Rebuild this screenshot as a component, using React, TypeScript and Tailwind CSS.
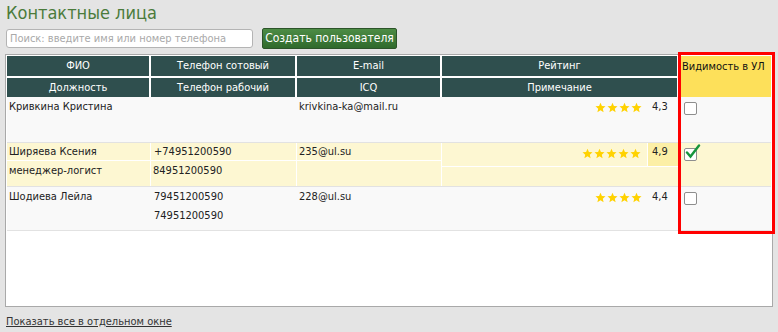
import React from 'react';

const font = { fontFamily: '"DejaVu Sans Condensed", "DejaVu Sans", sans-serif' };

const cols = 'grid grid-cols-[143px_145px_144px_236px_1fr] gap-x-[1px]';

const Star = () => (
  <svg width="11" height="11" viewBox="0 0 24 24" className="shrink-0">
    <path
      d="M12 1.5l3.1 7.2 7.8.7-5.9 5.1 1.8 7.6L12 18.1l-6.8 4 1.8-7.6-5.9-5.1 7.8-.7z"
      fill="#ffd200"
    />
  </svg>
);

const Stars: React.FC<{ n: number }> = ({ n }) => (
  <div className="flex gap-[1px] mt-[5px]">
    {Array.from({ length: n }).map((_, i) => (
      <Star key={i} />
    ))}
  </div>
);

const Checkbox: React.FC<{ checked?: boolean }> = ({ checked }) => (
  <div className="relative ml-[5px] mt-[5px] w-[13px] h-[13px] rounded-[2px] border border-[#8e8e8e] bg-white">
    {checked && (
      <svg width="16" height="16" viewBox="0 0 16 16" className="absolute left-[0px] top-[-5px]">
        <path d="M2 8.5l3.5 4L14 1.5" stroke="#16953c" strokeWidth="2.4" fill="none" strokeLinecap="round" />
      </svg>
    )}
  </div>
);

const App: React.FC = () => {
  return (
    <div className="relative w-[778px] h-[332px] bg-[#e4e4e4] text-[11px] text-[#222]" style={font}>
      <div className="pl-[6px] pt-[3px] text-[18px] leading-[20px] text-[#4b7b3b]">Контактные лица</div>

      <div className="flex items-center pl-[6px] mt-[5px]">
        <div className="w-[247px] h-[19px] bg-white border border-[#b4b4b4] rounded-[3px] pl-[3px] leading-[17px] text-[#a9a9a9]">
          Поиск: введите имя или номер телефона
        </div>
        <button className="ml-[9px] w-[135px] h-[21px] rounded-[2px] border border-[#2c5429] bg-gradient-to-b from-[#4d8c45] to-[#2f6a2c] text-white text-[12px] leading-[19px]">
          Создать пользователя
        </button>
      </div>

      <div className="ml-[5px] mt-[5px] w-[768px] h-[253px] border border-[#a9a9a9] bg-white p-[1px]">
        {/* header */}
        <div className="grid grid-cols-[142px_144px_143px_235px_1fr] grid-rows-[20px_19px] gap-[2px] text-white text-center">
          <div className="bg-[#2f4f4e] leading-[20px]">ФИО</div>
          <div className="bg-[#2f4f4e] leading-[20px]">Телефон сотовый</div>
          <div className="bg-[#2f4f4e] leading-[20px]">E-mail</div>
          <div className="bg-[#2f4f4e] leading-[20px]">Рейтинг</div>
          <div className="row-span-2 bg-[#fde05a] text-[#111] text-left pl-[3px] pt-[2px] leading-[18px]">Видимость в УЛ</div>
          <div className="bg-[#2f4f4e] leading-[19px]">Должность</div>
          <div className="bg-[#2f4f4e] leading-[19px]">Телефон рабочий</div>
          <div className="bg-[#2f4f4e] leading-[19px]">ICQ</div>
          <div className="bg-[#2f4f4e] leading-[19px]">Примечание</div>
        </div>

        {/* row 1 */}
        <div className={`${cols} h-[46px] bg-[#f9f9f9] border-b border-[#e2e2e2] leading-[20px]`}>
          <div className="pl-[2px]">Кривкина Кристина</div>
          <div />
          <div className="pl-[2px]">krivkina-ka@mail.ru</div>
          <div className="flex justify-end">
            <Stars n={4} />
            <div className="w-[30px] ml-[6px] pl-[4px]">4,3</div>
          </div>
          <div>
            <Checkbox />
          </div>
        </div>

        {/* row 2 */}
        <div className={`${cols} h-[44px] bg-white border-b border-[#e2e2e2] leading-[17px]`}>
          <div className="flex flex-col gap-[1px]">
            <div className="h-[17px] bg-[#fdf7d2] pl-[2px]">Ширяева Ксения</div>
            <div className="flex-1 bg-[#fdf7d2] pl-[2px] pt-[1px]">менеджер-логист</div>
          </div>
          <div className="flex flex-col gap-[1px]">
            <div className="h-[17px] bg-[#fdf7d2] pl-[3px]">+74951200590</div>
            <div className="flex-1 bg-[#fdf7d2] pl-[2px] pt-[1px]">84951200590</div>
          </div>
          <div className="flex flex-col gap-[1px]">
            <div className="h-[17px] bg-[#fdf7d2] pl-[2px]">235@ul.su</div>
            <div className="flex-1 bg-[#fdf7d2]" />
          </div>
          <div className="flex flex-col gap-[1px]">
            <div className="h-[23px] flex justify-end bg-[#fdf7d2]">
              <Stars n={5} />
              <div className="w-[31px] ml-[6px] pl-[4px] bg-[#fcefa6] border-l border-white">4,9</div>
            </div>
            <div className="flex-1 bg-[#fdf7d2]" />
          </div>
          <div className="bg-[#fdf7d2]">
            <Checkbox checked />
          </div>
        </div>

        {/* row 3 */}
        <div className={`${cols} h-[44px] bg-[#f9f9f9] border-b border-[#e2e2e2] leading-[19px]`}>
          <div className="pl-[2px]">Шодиева Лейла</div>
          <div className="pl-[3px]">
            <div>79451200590</div>
            <div>74951200590</div>
          </div>
          <div className="pl-[2px]">228@ul.su</div>
          <div className="flex justify-end">
            <Stars n={4} />
            <div className="w-[30px] ml-[6px] pl-[4px]">4,4</div>
          </div>
          <div>
            <Checkbox />
          </div>
        </div>
      </div>

      <div className="pl-[6px] mt-[7px] text-[11px] leading-[16px] text-[#333] underline">Показать все в отдельном окне</div>

      <div className="absolute left-[678px] top-[52px] w-[97px] h-[182px] border-[3px] border-[#ff0000] pointer-events-none" />
    </div>
  );
};

export default App;
